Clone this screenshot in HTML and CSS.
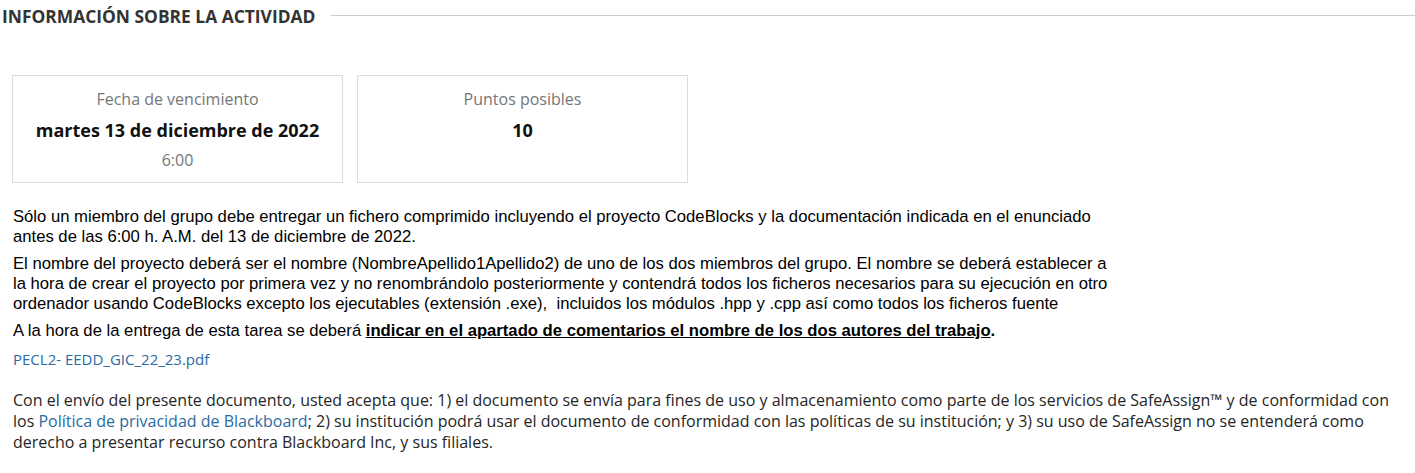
FILE: index.html
```html
<!DOCTYPE html>
<html lang="es">
<head>
<meta charset="utf-8">
<link rel="stylesheet" href="styles.css">
</head>
<body>
<div class="page">
  <div class="section-head">
    <h2 class="section-title">Información sobre la actividad</h2>
    <div class="section-rule"></div>
  </div>
  <div class="cards">
    <div class="card">
      <div class="card-label">Fecha de vencimiento</div>
      <div class="card-value">martes 13 de diciembre de 2022</div>
      <div class="card-sub">6:00</div>
    </div>
    <div class="card">
      <div class="card-label">Puntos posibles</div>
      <div class="card-value">10</div>
    </div>
  </div>
  <div class="instructions">
    <p>Sólo un miembro del grupo debe entregar un fichero comprimido incluyendo el proyecto CodeBlocks y la documentación indicada en el enunciado antes de las 6:00 h. A.M. del 13 de diciembre de 2022.</p>
    <p>El nombre del proyecto deberá ser el nombre (NombreApellido1Apellido2) de uno de los dos miembros del grupo. El nombre se deberá establecer a la hora de crear el proyecto por primera vez y no renombrándolo posteriormente y contendrá todos los ficheros necesarios para su ejecución en otro ordenador usando CodeBlocks excepto los ejecutables (extensión .exe),&nbsp; incluidos los módulos .hpp y .cpp así como todos los ficheros fuente</p>
    <p>A la hora de la entrega de esta tarea se deberá <strong class="u">indicar en el apartado de comentarios el nombre de los dos autores del trabajo</strong><strong>.</strong></p>
  </div>
  <a class="file-link" href="#">PECL2- EEDD_GIC_22_23.pdf</a>
  <p class="disclaimer">Con el envío del presente documento, usted acepta que: 1) el documento se envía para fines de uso y almacenamiento como parte de los servicios de SafeAssign™ y de conformidad con los <a href="#">Política de privacidad de Blackboard</a>; 2) su institución podrá usar el documento de conformidad con las políticas de su institución; y 3) su uso de SafeAssign no se entenderá como derecho a presentar recurso contra Blackboard Inc, y sus filiales.</p>
</div>
</body>
</html>
```

FILE: styles.css
```css
html, body {
  margin: 0;
  padding: 0;
  background: #fff;
}
body {
  font-family: "Open Sans", "Liberation Sans", sans-serif;
  color: #262626;
}
.page {
  width: 1415px;
}
.section-head {
  display: flex;
  align-items: center;
  gap: 16px;
  height: 31px;
  padding-left: 2px;
}
.section-title {
  margin: 0;
  font-size: 17.4px;
  font-weight: 700;
  text-transform: uppercase;
  color: #333;
  white-space: nowrap;
}
.section-rule {
  flex: 1;
  border-top: 1px solid #cdcdcd;
}
.cards {
  display: flex;
  gap: 14px;
  padding: 44px 0 0 12px;
}
.card {
  box-sizing: border-box;
  width: 331px;
  height: 108px;
  border: 1px solid #dcdcdc;
  text-align: center;
  padding-top: 12px;
}
.card-label {
  font-size: 16px;
  line-height: 22px;
  color: #767676;
}
.card-value {
  font-size: 18px;
  font-weight: 700;
  line-height: 24px;
  color: #111;
  margin-top: 8px;
}
.card-sub {
  font-size: 16px;
  line-height: 22px;
  color: #767676;
  margin-top: 7px;
}
.instructions {
  width: 1100px;
  padding: 24px 0 0 13px;
  font-family: "Liberation Sans", Arial, sans-serif;
  font-size: 16.67px;
  line-height: 20px;
  color: #000;
}
.instructions p {
  margin: 0 0 7px 0;
}
.instructions .u {
  text-decoration: underline;
}
.file-link {
  display: block;
  margin: 7px 0 0 13px;
  font-size: 15px;
  line-height: 22px;
  color: #2a6ba3;
  text-decoration: none;
}
.disclaimer {
  margin: 20px 0 0 13px;
  width: 1395px;
  font-size: 16px;
  line-height: 21px;
  color: #262626;
}
.disclaimer a {
  color: #2a6ba3;
  text-decoration: none;
}
```
